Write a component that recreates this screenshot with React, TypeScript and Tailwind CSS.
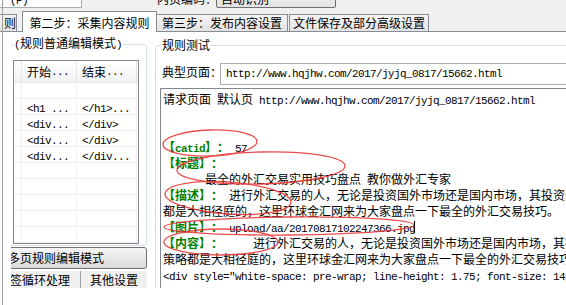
import React from "react";

const mono = "font-['Liberation_Mono',monospace] text-[11px] tracking-[-0.6px]";

function M({ children }: { children: React.ReactNode }) {
  return <span className={mono}>{children}</span>;
}

function G({ children }: { children: React.ReactNode }) {
  return <span className="font-bold text-[#008000]">{children}</span>;
}

const rows: [string, string][] = [
  ["", ""],
  ["<h1 ...", "</h1>..."],
  ["<div...", "</div>"],
  ["<div...", "</div>"],
  ["<div...", "</div..."],
  ["", ""],
  ["", ""],
  ["", ""],
  ["", ""],
  ["", ""],
];

function RuleList() {
  return (
    <div className="ml-[7px] mt-[7px] h-[184px] w-[126px] overflow-hidden border border-[#828790] bg-white">
      <div className="flex h-[22px] bg-linear-to-b from-[#ffffff] to-[#f1f2f4] border-b border-[#e5e5e5]">
        <div className="w-[8px] border-r border-[#e5e5e5]" />
        <div className="flex w-[55px] items-center border-r border-[#e5e5e5] pl-[5px]">
          开始<M>...</M>
        </div>
        <div className="flex w-[60px] items-center border-r border-[#e5e5e5] pl-[5px]">
          结束<M>...</M>
        </div>
      </div>
      {rows.map((r, i) => (
        <div key={i} className="flex h-[16px] border-b border-[#f0f0f0]">
          <div className="w-[8px] border-r border-[#f0f0f0]" />
          <div className="w-[55px] whitespace-pre border-r border-[#f0f0f0] pl-[5px]">
            <M>{r[0]}</M>
          </div>
          <div className="w-[60px] whitespace-pre border-r border-[#f0f0f0] pl-[5px]">
            <M>{r[1]}</M>
          </div>
        </div>
      ))}
    </div>
  );
}

function TestText() {
  return (
    <div className="ml-[4px] mt-[3px] h-[210px] w-[440px] border border-[#828790] bg-white pl-[2px] pt-[2px]">
      <div className="h-[16px] whitespace-pre">
        请求页面<M> </M>默认页<M> http://www.hqjhw.com/2017/jyjq_0817/15662.html</M>
      </div>
      <div className="h-[16px]" />
      <div className="h-[16px]" />
      <div className="h-[16px] whitespace-pre">
        <G>
          【<M>catid</M>】：
        </G>
        <M> 57</M>
      </div>
      <div className="h-[16px] whitespace-pre">
        <G>【标题】：</G>
      </div>
      <div className="h-[16px] whitespace-pre">
        <M>       </M>最全的外汇交易实用技巧盘点<M> </M>教你做外汇专家
      </div>
      <div className="h-[16px] whitespace-pre">
        <G>【描述】：</G>
        <M> </M>进行外汇交易的人，无论是投资国外市场还是国内市场，其投资的策略
      </div>
      <div className="h-[16px] whitespace-pre">都是大相径庭的，这里环球金汇网来为大家盘点一下最全的外汇交易技巧。</div>
      <div className="h-[16px] whitespace-pre">
        <G>【图片】：</G>
        <M> upload/aa/20170817102247366.jpg</M>
      </div>
      <div className="h-[16px] whitespace-pre">
        <G>【内容】：</G>
        <M>     </M>进行外汇交易的人，无论是投资国外市场还是国内市场，其投资的
      </div>
      <div className="h-[16px] whitespace-pre">策略都是大相径庭的，这里环球金汇网来为大家盘点一下最全的外汇交易技巧。</div>
      <div className="h-[16px] whitespace-pre">
        <M>{'<div style="white-space: pre-wrap; line-height: 1.75; font-size: 14px;">'}</M>
      </div>
      <div className="h-[16px] whitespace-pre">
        <M>{'              "                    "         "'}</M>
      </div>
    </div>
  );
}

export default function App() {
  return (
    <div className="relative h-[305px] w-[566px] overflow-hidden bg-white text-[12px] leading-[16px] text-black font-['Noto_Sans_CJK_SC',sans-serif] [text-spacing-trim:space-all]">
      {/* top strip, mostly scrolled out of view */}
      <div className="h-[11px] overflow-hidden bg-[#f0f0f0]">
        <div className="-mt-[13px] flex h-[21px] items-start">
          <div className="h-full w-[82px] border-b border-r border-[#abadb3] bg-white pl-[10px] pt-[4px]">
            <M>(P)</M>
          </div>
          <span className="ml-[75px] mt-[4px] w-[59px] whitespace-nowrap">内页编码：</span>
          <div className="h-full w-[120px] rounded-[2px] border border-[#707070] bg-linear-to-b from-[#f2f2f2] to-[#e3e3e3] pl-[4px] pt-[3px]">
            自动识别
          </div>
        </div>
      </div>

      {/* tabs */}
      <div className="flex h-[21px] items-end bg-[#f0f0f0]">
        <div className="flex h-[18px] w-[17px] items-center justify-end overflow-hidden border border-l-0 border-[#898c95] bg-linear-to-b from-[#f5f5f5] to-[#e3e3e3]">
          则
        </div>
        <div className="h-px w-[5px] bg-[#898c95]" />
        <div className="flex h-[21px] w-[135px] justify-center border border-b-0 border-[#898c95] bg-white pt-[3px]">
          第二步：采集内容规则
        </div>
        <div className="flex h-[18px] w-[131px] items-center justify-center border border-l-0 border-[#898c95] bg-linear-to-b from-[#f5f5f5] to-[#e3e3e3]">
          第三步：发布内容设置
        </div>
        <div className="h-px w-[1px] bg-[#898c95]" />
        <div className="flex h-[18px] w-[140px] items-center justify-center border border-[#898c95] bg-linear-to-b from-[#f5f5f5] to-[#e3e3e3]">
          文件保存及部分高级设置
        </div>
        <div className="h-px flex-1 bg-[#898c95]" />
      </div>

      {/* body */}
      <div className="flex h-[256px]">
        <div className="w-[11px] shrink-0" />
        <div className="w-[139px] shrink-0 overflow-hidden">
          <div className="-ml-[11px] w-[150px]">
            <fieldset className="ml-[5px] mt-[3px] w-[142px] rounded-[3px] border border-[#d5dfe5] pb-[1px]">
              <legend className="ml-[7px] px-[1px] leading-[16px]">
                <M>(</M>规则普通编辑模式<M>)</M>
              </legend>
              <RuleList />
            </fieldset>
            <div className="mt-[1px] flex h-[22px] w-[147px] items-center whitespace-nowrap rounded-[3px] border border-[#707070] bg-linear-to-b from-[#f6f6f6] to-[#dadada] pl-[7px]">
              多页规则编辑模式
            </div>
            <div className="mt-[2px] flex h-[18px] w-[147px] bg-[#f0f0f0]">
              <div className="flex w-[81px] shrink-0 items-center justify-end whitespace-nowrap border-r border-[#a0a0a0] pr-[10px]">
                标签循环处理
              </div>
              <div className="flex flex-1 items-center justify-center whitespace-nowrap">其他设置</div>
            </div>
          </div>
        </div>

        <div className="w-[416px] shrink-0 overflow-hidden">
          <fieldset className="ml-[5px] mt-[5px] w-[440px] rounded-[3px] border border-[#d5dfe5]">
            <legend className="ml-[5px] px-[1px] leading-[16px]">规则测试</legend>
            <div className="mt-[10px] flex h-[22px] items-start">
              <span className="ml-[6px] mt-[1px] w-[58px] whitespace-nowrap">典型页面：</span>
              <div className="h-[22px] flex-1 border border-[#abadb3] bg-white pl-[5px] whitespace-pre">
                <M>http://www.hqjhw.com/2017/jyjq_0817/15662.html</M>
              </div>
            </div>
            <TestText />
          </fieldset>
        </div>
      </div>

      {/* window edge line */}
      <div className="absolute left-[2px] top-0 h-full w-px bg-[#a0a0a0]" />

      {/* hand-drawn red marks over the test result */}
      <svg className="pointer-events-none absolute left-0 top-0" width="566" height="305" viewBox="0 0 566 305">
        <g fill="none" stroke="#ea3a3a" strokeWidth="1.3" opacity="0.9">
          <ellipse cx="210" cy="143" rx="47" ry="13" transform="rotate(-2 210 143)" />
          <ellipse cx="261" cy="168" rx="84" ry="16" transform="rotate(-1.5 261 168)" />
          <ellipse cx="228" cy="198" rx="63" ry="16" transform="rotate(4 228 198)" />
          <ellipse cx="289" cy="226" rx="125" ry="9" transform="rotate(-0.5 289 226)" />
          <ellipse cx="221" cy="242" rx="57" ry="13" />
        </g>
        <line x1="414.5" y1="221" x2="414.5" y2="233" stroke="#000" strokeWidth="1" />
      </svg>
    </div>
  );
}
